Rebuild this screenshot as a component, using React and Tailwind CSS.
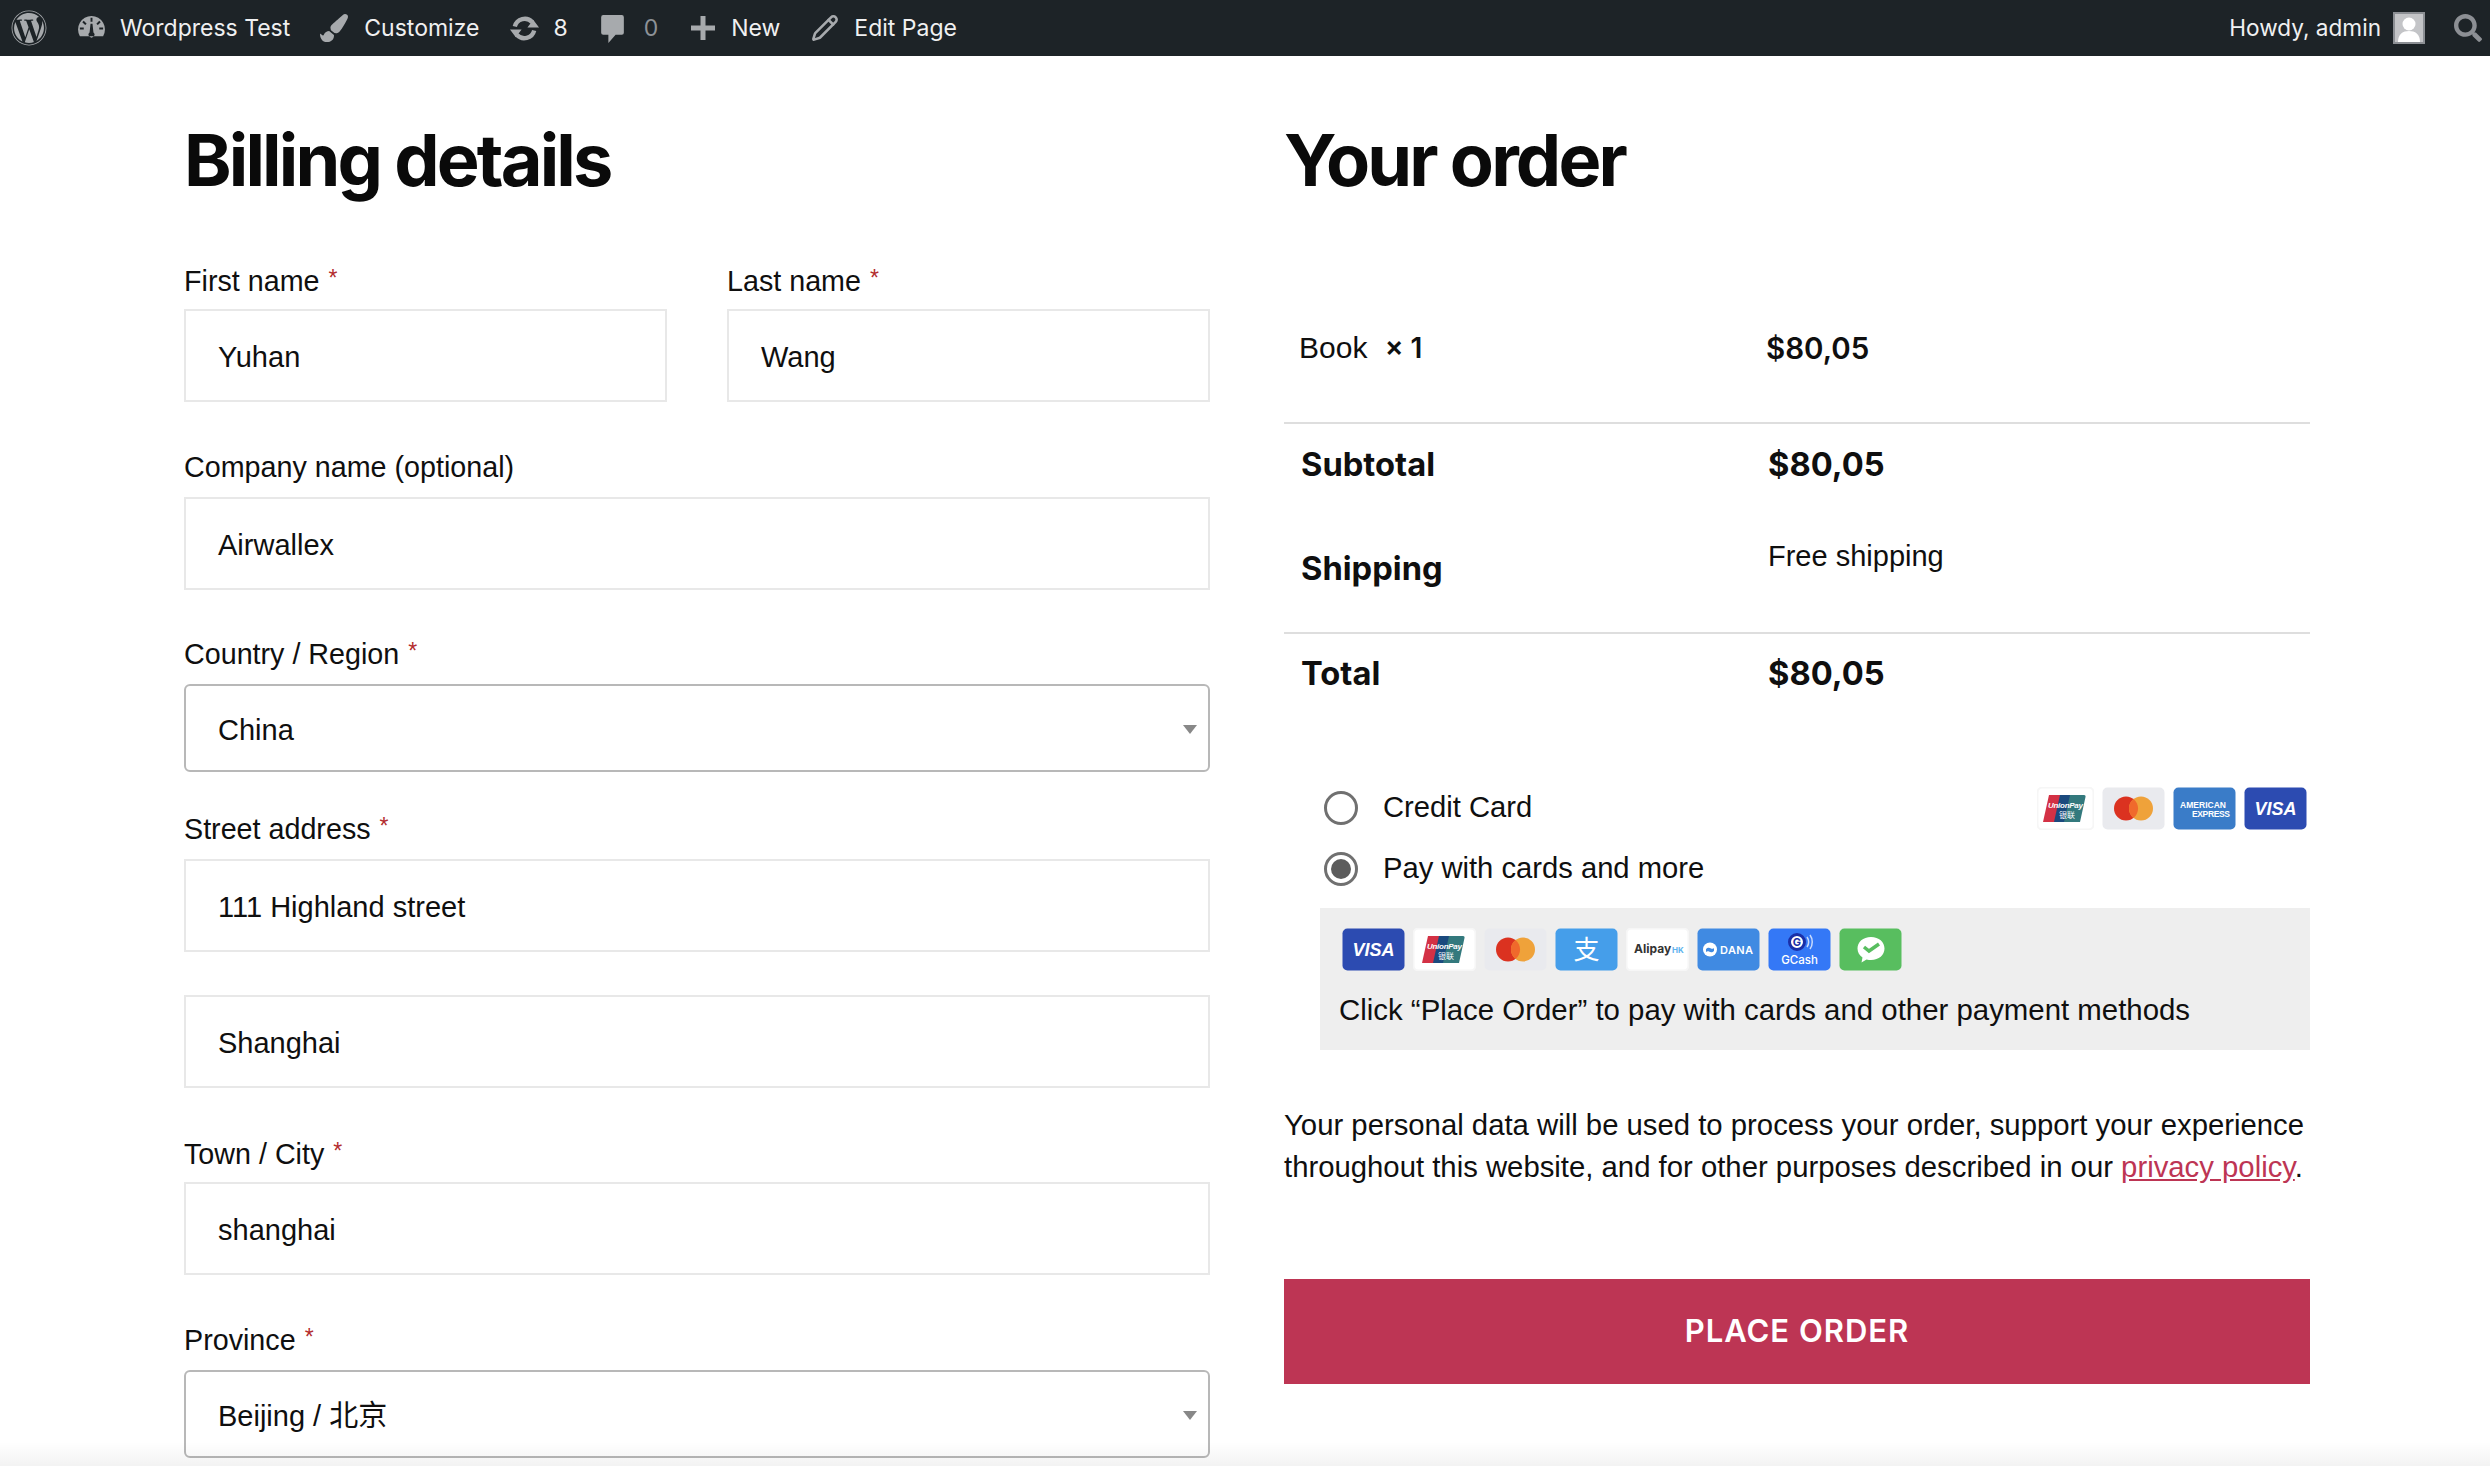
/**
 * Checkout page: billing form and order summary
 */
import { FaWordpress, FaPaintBrush, FaSearch } from 'react-icons/fa';
import { Pencil } from 'lucide-react';

const bodyFont = "font-['Liberation_Sans',Arial,'Noto_Sans_CJK_SC',sans-serif]";

const AdminItem = ({ icon, label, muted, className = '', iconBox = 'w-[44px]' }) => (
    <div className={`flex items-center ${className}`}>
        <span className={`${iconBox} flex items-center`}>{icon}</span>
        <span className={muted ? 'text-[#8d9297]' : 'text-[#f0f0f1]'}>{label}</span>
    </div>
);

const AdminBar = () => (
    <div className="h-[56px] bg-[#1d2327] flex items-center justify-between font-['Inter',sans-serif] text-[23px] shrink-0">
        <div className="flex items-center">
            <FaWordpress className="w-[36px] h-[36px] ml-[11px] text-[#a7aaad]" />
            <AdminItem
                className="ml-[29px]"
                label="Wordpress Test"
                icon={
                    <svg viewBox="0 0 32 32" className="w-[31px] h-[31px]">
                        <path fill="#a7aaad" fillRule="evenodd" d="M16 3a14 14 0 0 0-12 21h24A14 14 0 0 0 16 3zm-1 2h2v4h-2zM8 8l3 3-1.500 1.500-3-3zm16 0 1.500 1.500-3 3L21 11zM4 15h4v2H4zm20 0h4v2h-4zm-6 5-1-9h-2l-1 9a3 3 0 1 0 4 0z" />
                    </svg>
                }
            />
            <AdminItem className="ml-[30px]" label="Customize" icon={<FaPaintBrush className="w-[28px] h-[28px] text-[#a7aaad]" />} />
            <AdminItem
                className="ml-[30px]"
                label="8"
                icon={
                    <svg viewBox="0 0 32 32" className="w-[31px] h-[31px]">
                        <path fill="none" stroke="#a7aaad" strokeWidth="4.500" d="M6 14a10.500 10.500 0 0 1 18-4.500M26 18a10.500 10.500 0 0 1-18 4.500" />
                        <path fill="#a7aaad" d="M31 15H19l6-8zM1 17h12l-6 8z" />
                    </svg>
                }
            />
            <AdminItem
                className="ml-[32px]"
                label="0"
                muted
                icon={
                    <svg viewBox="0 0 24 32" className="w-[25px] h-[33px]">
                        <path fill="#a7aaad" d="M3 3h18a2 2 0 0 1 2 2v15a2 2 0 0 1-2 2h-6l-7 8v-8H3a2 2 0 0 1-2-2V5a2 2 0 0 1 2-2z" />
                    </svg>
                }
            />
            <AdminItem
                className="ml-[32px]"
                label="New"
                iconBox="w-[41px]"
                icon={
                    <svg viewBox="0 0 26 26" className="w-[26px] h-[26px]">
                        <path fill="#a7aaad" d="M10.500 1h5v9.500H25v5h-9.500V25h-5v-9.500H1v-5h9.500z" />
                    </svg>
                }
            />
            <AdminItem className="ml-[31px]" iconBox="w-[43px]" label="Edit Page" icon={<Pencil className="w-[28px] h-[28px] text-[#a7aaad]" strokeWidth={2.2} />} />
        </div>
        <div className="flex items-center">
            <span className="text-[#f0f0f1] text-[22.6px]">Howdy, admin</span>
            <div className="ml-[12px] w-[32px] h-[32px] border-2 border-[#8c8f94] bg-[#c3c4c7] overflow-hidden flex items-end justify-center">
                <svg viewBox="0 0 28 28" className="w-[28px] h-[28px]">
                    <circle cx="14" cy="10" r="6.500" fill="#fff" />
                    <path fill="#fff" d="M3 28c0-8 5-11 11-11s11 3 11 11z" />
                </svg>
            </div>
            <FaSearch className="w-[28px] h-[28px] ml-[29px] mr-[8px] text-[#8c8f94]" />
        </div>
    </div>
);

const Label = ({ text, required, className = '' }) => (
    <div className={`h-[42px] leading-[42px] text-[28.7px] text-[#0f0f0f] ${className}`}>
        {text}
        {required && <span className="text-[#b32d2e] text-[23px] align-[5px] ml-[9px]">*</span>}
    </div>
);

const TextField = ({ label, required, value, className = '' }) => (
    <div className={className}>
        {label && <Label text={label} required={required} />}
        <div className={`h-[93px] border-2 border-[#e8e8e8] pl-[32px] pr-[32px] pt-[4px] flex items-center text-[29px] text-[#0f0f0f] ${label ? 'mt-[10px]' : ''}`}>
            {value}
        </div>
    </div>
);

const SelectField = ({ label, required, value, className = '' }) => (
    <div className={className}>
        <Label text={label} required={required} />
        <div className="relative h-[88px] mt-[12px] border-2 border-[#b8b8b8] rounded-[6px] pl-[32px] pt-[6px] flex items-center text-[29px] text-[#0f0f0f]">
            {value}
            <span className="absolute right-[11px] top-[39px] w-0 h-0 border-x-[7px] border-x-transparent border-t-[9px] border-t-[#888]" />
        </div>
    </div>
);

const BillingForm = () => (
    <div className="w-[1026px] shrink-0">
        <h1 className="h-[90px] leading-[90px] mt-[59px] text-[72px] font-bold tracking-[-2.85px] text-[#0a0a0a] font-['Inter',sans-serif]">Billing details</h1>
        <div className="flex gap-[60px] mt-[52px]">
            <TextField className="w-[483px]" label="First name" required value="Yuhan" />
            <TextField className="w-[483px]" label="Last name" required value="Wang" />
        </div>
        <TextField className="mt-[44px] [&>div:last-child]:mt-[9px]" label="Company name (optional)" value="Airwallex" />
        <SelectField className="mt-[40px]" label="Country / Region" required value="China" />
        <TextField className="mt-[33px] [&>div:last-child]:mt-[12px]" label="Street address" required value="111 Highland street" />
        <TextField className="mt-[43px]" value="Shanghai" />
        <TextField className="mt-[42px]" label="Town / City" required value="shanghai" />
        <SelectField className="mt-[41px]" label="Province" required value="Beijing / 北京" />
    </div>
);

const CardIcon = ({ bg, children, border, narrow }) => (
    <svg viewBox={narrow ? '3 0 57 43' : '0 0 63 43'} className={`${narrow ? 'w-[57px]' : 'w-[63px]'} h-[43px] shrink-0`}>
        <rect x={narrow ? 3.5 : 0.5} y="0.500" width={narrow ? 56 : 62} height="42" rx="5" fill={bg} stroke={border || 'none'} strokeWidth={border ? 2 : 0} />
        {children}
    </svg>
);

const Visa = () => (
    <CardIcon bg="#2c4bb1">
        <text x="31.500" y="28" textAnchor="middle" fill="#fff" fontSize="18" fontWeight="700" fontStyle="italic" fontFamily="Liberation Sans, sans-serif">VISA</text>
    </CardIcon>
);

const UnionPay = ({ narrow }) => (
    <CardIcon bg="#fff" border="#f6f6f6" narrow={narrow}>
        <path fill="#d33145" d="M15 8h16l-6 27H9z" />
        <path fill="#1b4a7e" d="M26 8h15l-6 27H20z" />
        <path fill="#33797d" d="M36 8h14a1.500 1.500 0 0 1 1.500 2L46 35H30z" />
        <text x="14" y="21" fill="#fff" fontSize="8" fontStyle="italic" fontWeight="700" textLength="35" fontFamily="Liberation Sans, sans-serif">UnionPay</text>
        <text x="33" y="31" textAnchor="middle" fill="#fff" fontSize="8" fontFamily="Noto Sans CJK SC, sans-serif">银联</text>
    </CardIcon>
);

const Mastercard = () => (
    <CardIcon bg="#e9eaee">
        <circle cx="24" cy="21.500" r="12" fill="#db3220" />
        <circle cx="39" cy="21.500" r="12" fill="#efa23a" />
        <path fill="#f0692c" d="M31.500 12.100a12 12 0 0 1 0 18.800 12 12 0 0 1 0-18.800z" />
    </CardIcon>
);

const Amex = () => (
    <CardIcon bg="#3a7cc8">
        <text x="7" y="21" fill="#fff" fontSize="8.500" fontWeight="700" textLength="46" fontFamily="Liberation Sans, sans-serif">AMERICAN</text>
        <text x="19" y="30" fill="#fff" fontSize="8.500" fontWeight="700" textLength="38" fontFamily="Liberation Sans, sans-serif">EXPRESS</text>
    </CardIcon>
);

const Alipay = () => (
    <CardIcon bg="#459eea">
        <text x="31.500" y="31" textAnchor="middle" fill="#fff" fontSize="26" fontFamily="Noto Sans CJK SC, sans-serif">支</text>
    </CardIcon>
);

const AlipayHK = () => (
    <CardIcon bg="#fff" border="#f6f6f6">
        <text x="8" y="25" fill="#333" fontSize="12" fontWeight="700" fontFamily="Inter, sans-serif">Alipay</text>
        <text x="46" y="25" fill="#5db3ee" fontSize="8" fontWeight="700" fontFamily="Inter, sans-serif">HK</text>
    </CardIcon>
);

const Dana = () => (
    <CardIcon bg="#408ae2">
        <circle cx="13" cy="21.500" r="7" fill="#fff" />
        <path fill="#408ae2" d="M9 21c2-2 4-1 5-.500s2 .500 3-.500v3c-2 2-4 1-5 .500s-2-.500-3 .500z" />
        <text x="23" y="26" fill="#fff" fontSize="11" fontWeight="600" textLength="33" fontFamily="Inter, sans-serif">DANA</text>
    </CardIcon>
);

const GCash = () => (
    <CardIcon bg="#3478f6">
        <circle cx="29" cy="14" r="7.500" fill="#fff" stroke="#1a2fa8" strokeWidth="3" />
        <text x="29" y="18" textAnchor="middle" fill="#1a2fa8" fontSize="11" fontWeight="700" fontFamily="Inter, sans-serif">G</text>
        <path fill="none" stroke="#c7dafc" strokeWidth="1.500" d="M39 9c2 3 2 7 0 10M42 7c3 4 3 10 0 14" />
        <text x="31.500" y="36" textAnchor="middle" fill="#fff" fontSize="11.500" fontWeight="500" fontFamily="Inter, sans-serif">GCash</text>
    </CardIcon>
);

const WeChat = () => (
    <CardIcon bg="#58be5f">
        <path fill="#fff" d="M32 9c-8 0-13.500 5-13.500 11.500 0 4 2 7 5 9l-1 5 5-3c2 .500 3 .500 4.500.500 8 0 13.500-5 13.500-11.500S40 9 32 9z" />
        <path fill="none" stroke="#58be5f" strokeWidth="3.500" d="M25 19l5 4 10-7" />
    </CardIcon>
);

const Radio = ({ checked }) => (
    <span className="w-[34px] h-[34px] rounded-full border-[3px] border-[#707070] flex items-center justify-center shrink-0">
        {checked && <span className="w-[20px] h-[20px] rounded-full bg-[#5c5c5c]" />}
    </span>
);

const OrderSummary = () => (
    <div className="w-[1026px] shrink-0 text-[#0f0f0f]">
        <h2 className="h-[90px] leading-[90px] mt-[59px] text-[72px] font-bold tracking-[-2.85px] text-[#0a0a0a] font-['Inter',sans-serif]">Your order</h2>

        {/* Order lines */}
        <div className="h-[122px] mt-[97px] pl-[15px] pt-[25px] flex items-start leading-[42px] text-[30px] border-b-2 border-[#dedede]">
            <div className="w-[467px]">Book <span className="font-semibold text-[28px] ml-[9px] font-['Inter',sans-serif]">× 1</span></div>
            <div className="font-['Inter',sans-serif] font-semibold text-[29.5px]">$80,05</div>
        </div>

        <div className="flex h-[80px] items-center pl-[17px] pt-[2px] text-[32.7px] font-bold font-['Inter',sans-serif]">
            <div className="w-[467px]">Subtotal</div>
            <div>$80,05</div>
        </div>
        <div className="flex h-[130px] items-start pl-[17px] border-b-2 border-[#dedede]">
            <div className="w-[467px] self-center pt-[2px] text-[32.7px] font-bold font-['Inter',sans-serif]">Shipping</div>
            <div className="text-[29px] leading-[42px] pt-[31px]">Free shipping</div>
        </div>
        <div className="flex h-[78px] items-center pl-[17px] pt-[2px] text-[32.7px] font-bold font-['Inter',sans-serif]">
            <div className="w-[467px]">Total</div>
            <div>$80,05</div>
        </div>

        {/* Payment methods */}
        <div className="mt-[74px] flex items-center justify-between pl-[40px] pr-[3px] h-[44px]">
            <div className="flex items-center gap-[25px] text-[29.2px]">
                <Radio />
                Credit Card
            </div>
            <div className="flex items-center gap-[8px]">
                <UnionPay narrow />
                <Mastercard />
                <Amex />
                <Visa />
            </div>
        </div>
        <div className="mt-[17px] flex items-center gap-[25px] pl-[40px] h-[44px] text-[29.2px]">
            <Radio checked />
            Pay with cards and more
        </div>
        <div className="ml-[36px] mt-[17px] h-[142px] bg-[#eeeeee] pl-[19px] pt-[20px]">
            <div className="flex gap-[8px] pl-[3px]">
                <Visa />
                <UnionPay />
                <Mastercard />
                <Alipay />
                <AlipayHK />
                <Dana />
                <GCash />
                <WeChat />
            </div>
            <p className="mt-[18px] text-[29.4px] leading-[42px]">Click “Place Order” to pay with cards and other payment methods</p>
        </div>

        <p className="mt-[54px] text-[29.3px] leading-[42px]">
            Your personal data will be used to process your order, support your experience throughout this website, and for other purposes described in our{' '}
            <span className="text-[#bd3554] underline">privacy policy</span>.
        </p>

        <div className="mt-[91px] h-[105px] bg-[#bd3554] flex items-center justify-center text-white text-[31px] font-semibold tracking-[1px] font-['Inter',sans-serif]">
            PLACE ORDER
        </div>
    </div>
);

const App = () => (
    <div className={`relative h-[1466px] overflow-hidden bg-white flex flex-col ${bodyFont}`}>
        <AdminBar />
        <div className="flex gap-[74px] pl-[184px]">
            <BillingForm />
            <OrderSummary />
        </div>
        {/* faint shade along the bottom edge */}
        <div className="absolute bottom-0 inset-x-0 h-[24px] bg-gradient-to-t from-black/5 to-transparent pointer-events-none" />
    </div>
);

export default App;
